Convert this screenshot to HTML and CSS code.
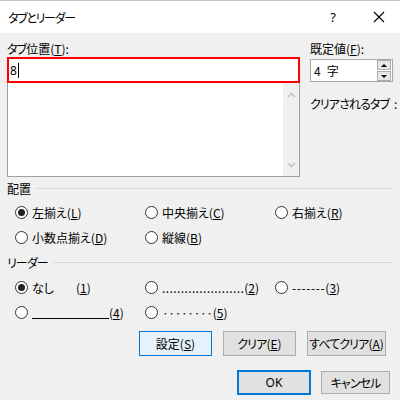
FILE: index.html
```html
<!DOCTYPE html>
<html lang="ja">
<head>
<meta charset="UTF-8">
<title>タブとリーダー</title>
<link rel="stylesheet" href="styles.css">
</head>
<body>
<div class="dialog">
    <div class="titlebar">
        <span class="title kana">タブとリーダー</span>
        <span class="help">?</span>
        <svg class="close" width="12" height="12" viewBox="0 0 12 12">
            <path d="M1 1 L11 11 M11 1 L1 11" stroke="#000" stroke-width="1.1" fill="none"/>
        </svg>
    </div>

    <div class="content">
        <div class="top">
            <div class="tabs">
                <label class="lbl" for="pos"><span class="kana">タブ</span>位置(<u>T</u>):</label>
                <div class="tab-input" id="pos">8<span class="caret"></span></div>
                <div class="tab-list">
                    <div class="scroll">
                        <svg width="9" height="6" viewBox="0 0 9 6"><path d="M1 5 L4.5 1.5 L8 5" stroke="#c4c4c4" stroke-width="1.6" fill="none"/></svg>
                        <svg width="9" height="6" viewBox="0 0 9 6"><path d="M1 1 L4.5 4.5 L8 1" stroke="#c4c4c4" stroke-width="1.6" fill="none"/></svg>
                    </div>
                </div>
            </div>
            <div class="side">
                <label class="lbl">既定値(<u>F</u>):</label>
                <div class="spin">
                    <span class="spin-val">4<span class="unit">字</span></span>
                    <div class="spin-btns">
                        <span class="spin-btn"><i class="tri up"></i></span>
                        <span class="spin-btn"><i class="tri down"></i></span>
                    </div>
                </div>
                <div class="cleared"><span class="kana">クリアされるタブ</span><span class="colon">:</span></div>
            </div>
        </div>

        <div class="group-head"><span>配置</span></div>
        <div class="options">
            <span class="opt"><i class="radio on"></i>左揃え(<u>L</u>)</span>
            <span class="opt"><i class="radio"></i>中央揃え(<u>C</u>)</span>
            <span class="opt"><i class="radio"></i>右揃え(<u>R</u>)</span>
            <span class="opt"><i class="radio"></i>小数点揃え(<u>D</u>)</span>
            <span class="opt"><i class="radio"></i>縦線(<u>B</u>)</span>
        </div>

        <div class="group-head"><span class="kana">リーダー</span></div>
        <div class="options">
            <span class="opt"><i class="radio on"></i><span class="none">なし</span>(<u>1</u>)</span>
            <span class="opt"><i class="radio"></i><span class="dots">......................</span>(<u>2</u>)</span>
            <span class="opt"><i class="radio"></i><span class="dashes">-------</span>(<u>3</u>)</span>
            <span class="opt"><i class="radio"></i><span class="line"></span>(<u>4</u>)</span>
            <span class="opt"><i class="radio"></i><span class="mids">········</span>(<u>5</u>)</span>
        </div>

        <div class="actions">
            <button class="btn focus">設定(<u>S</u>)</button>
            <button class="btn"><span class="kana">クリア</span>(<u>E</u>)</button>
            <button class="btn wide"><span class="kana">すべてクリア</span>(<u>A</u>)</button>
        </div>

        <div class="footer">
            <button class="btn ok">OK</button>
            <button class="btn cancel kana">キャンセル</button>
        </div>
    </div>
</div>
</body>
</html>
```

FILE: styles.css
```css
* {
    margin: 0;
    padding: 0;
    box-sizing: border-box;
}

body {
    width: 400px;
    height: 400px;
    overflow: hidden;
    background: #f0f0f0;
    color: #000;
    font-family: "Noto Sans CJK JP", "Noto Sans", sans-serif;
    font-size: 12px;
    font-feature-settings: "palt";
}

u {
    text-decoration: underline;
    text-underline-offset: 1px;
}

/* kana runs are set tighter, like the system UI font */
.kana {
    letter-spacing: -0.9px;
}

/* title bar */
.titlebar {
    display: flex;
    align-items: center;
    height: 33px;
    padding-left: 8px;
    border-top: 1px solid #c6c6c6;
    background: #fff;
}

.title {
    flex: 1;
    letter-spacing: -1.3px;
}

.help {
    margin-right: 37px;
    font-family: "Noto Sans", sans-serif;
    font-size: 13px;
}

.close {
    margin-right: 15px;
}

/* dialog body */
.content {
    padding: 7px 7px 0 7px;
}

.top {
    display: flex;
    gap: 9px;
}

.tabs {
    width: 296px;
}

.lbl {
    display: block;
    height: 17px;
    line-height: 17px;
}

.tab-input {
    display: flex;
    align-items: center;
    height: 26px;
    padding-left: 1px;
    border: 2px solid #f00;
    background: #fff;
    font-family: "Noto Sans", sans-serif;
    font-size: 12px;
}

.caret {
    width: 1px;
    height: 15px;
    margin-left: 1px;
    background: #000;
}

.tab-list {
    display: flex;
    justify-content: flex-end;
    height: 94px;
    border: 1px solid #a0a0a0;
    border-top: 0;
    background: #fff;
}

.scroll {
    display: flex;
    flex-direction: column;
    justify-content: space-between;
    align-items: center;
    width: 16px;
    padding: 9px 0 8px;
    background: #f0f0f0;
}

.side {
    width: 84px;
    padding-left: 1px;
}

.spin {
    display: flex;
    align-items: center;
    height: 23px;
    margin-top: 2px;
    padding: 0 1px 0 3px;
    border: 1px solid #a8a8a8;
    background: #fff;
}

.spin-val {
    flex: 1;
}

.unit {
    margin-left: 6px;
}

.spin-btns {
    display: flex;
    flex-direction: column;
    gap: 1px;
}

.spin-btn {
    display: flex;
    align-items: center;
    justify-content: center;
    width: 14px;
    height: 10px;
    border: 1px solid #adadad;
    background: #e6e6e6;
}

.tri {
    width: 0;
    height: 0;
    border-left: 3px solid transparent;
    border-right: 3px solid transparent;
}

.tri.up {
    border-bottom: 3px solid #000;
}

.tri.down {
    border-top: 3px solid #000;
}

.cleared {
    margin-top: 13px;
    line-height: 17px;
    white-space: nowrap;
}

.colon {
    margin-left: 5px;
}

/* group headings with a rule */
.group-head {
    display: flex;
    align-items: center;
    height: 23px;
}

.group-head:after {
    content: '';
    flex: 1;
    margin-left: 5px;
    border-top: 1px solid #dadada;
}

.options + .group-head {
    height: 25px;
}

.options {
    display: grid;
    grid-template-columns: 130px 130px 130px;
    grid-auto-rows: 25px;
    padding-left: 8px;
}

.opt {
    display: flex;
    align-items: center;
    white-space: nowrap;
}

.radio {
    display: flex;
    align-items: center;
    justify-content: center;
    width: 13px;
    height: 13px;
    margin-right: 4px;
    border: 1px solid #333;
    border-radius: 50%;
    background: #fff;
}

.radio.on:after {
    content: '';
    width: 7px;
    height: 7px;
    border-radius: 50%;
    background: #222;
}

.none {
    display: inline-block;
    width: 44px;
}

.dots {
    letter-spacing: 0.4px;
}

.dashes {
    letter-spacing: 0.6px;
}

.line {
    display: inline-block;
    width: 77px;
    height: 10px;
    margin-top: 2px;
    border-bottom: 1px solid #000;
}

.mids {
    letter-spacing: -0.4px;
}

/* buttons */
.actions {
    display: flex;
    justify-content: flex-end;
    gap: 11px;
    margin-top: 6px;
    padding-right: 7px;
}

.footer {
    display: flex;
    justify-content: flex-end;
    align-items: center;
    gap: 10px;
    margin-top: 14px;
    padding-right: 3px;
}

.btn {
    width: 73px;
    height: 25px;
    padding: 0;
    border: 1px solid #adadad;
    background: #e1e1e1;
    color: #000;
    font-family: inherit;
    font-size: 12px;
    font-feature-settings: "palt";
    white-space: nowrap;
}

.btn.focus {
    border-color: #0078d7;
    background: #e5f1fb;
}

.btn.wide {
    width: 79px;
}

.btn.ok {
    width: 74px;
    border: 2px solid #0078d7;
    font-family: "Noto Sans", sans-serif;
}

.btn.cancel {
    width: 69px;
    height: 23px;
}
```
